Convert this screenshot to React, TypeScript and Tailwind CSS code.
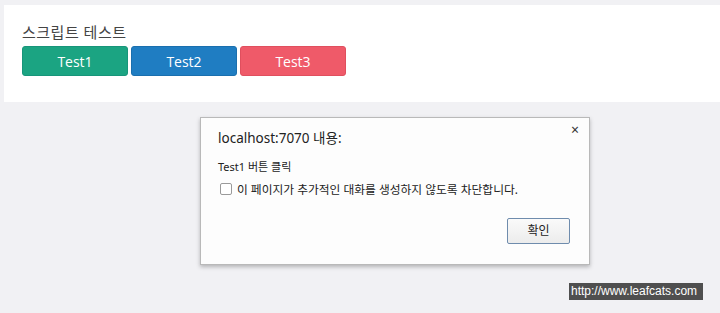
import React from "react";

const KR = "font-['Open_Sans','Noto_Sans_CJK_KR',sans-serif]";

function ScriptPanel() {
  const buttons = [
    { label: "Test1", className: "bg-[#1ba482] border-[#17957a]" },
    { label: "Test2", className: "bg-[#1f7dc2] border-[#1a6fae]" },
    { label: "Test3", className: "bg-[#ef5a69] border-[#e04f5e]" },
  ];

  return (
    <div className={`ml-[4px] mt-[5px] bg-white pl-[18px] pt-[17px] pb-[26px] ${KR}`}>
      <h2 className="text-[15px] leading-[20px] text-[#444] tracking-[0.5px]">스크립트 테스트</h2>
      <div className="mt-[4px] flex gap-[3px]">
        {buttons.map((b) => (
          <button
            key={b.label}
            type="button"
            className={`h-[30px] w-[106px] rounded-[3px] border text-[14px] text-white ${b.className}`}
          >
            {b.label}
          </button>
        ))}
      </div>
    </div>
  );
}

function AlertDialog() {
  return (
    <div className="absolute left-[200px] top-[117px] flex w-[390px] flex-col border border-[#b9b9b9] bg-[#fdfdfd] pb-[20px] pl-[17px] pr-[19px] pt-[10px] font-['Noto_Sans','Noto_Sans_CJK_KR',sans-serif] text-[#222] shadow-[0_2px_4px_rgba(0,0,0,0.25)]">
      <span className="absolute right-[10px] top-[5px] text-[14px] leading-[14px] text-[#333]">×</span>
      <p className="text-[13.5px] leading-[20px]">localhost:7070 내용:</p>
      <p className="mt-[12px] text-[11px] leading-[14px]">Test1 버튼 클릭</p>
      <label className="mt-[8px] flex items-center gap-[5px] text-[11.75px] leading-[14px]">
        <span className="ml-[2px] h-[12px] w-[12px] shrink-0 rounded-[2px] border border-[#9a9a9a] bg-white" />
        <span>이 페이지가 추가적인 대화를 생성하지 않도록 차단합니다.</span>
      </label>
      <div className="mt-[22px] flex justify-end">
        <button
          type="button"
          className="h-[26px] w-[63px] rounded-[2px] border border-[#6f8cad] bg-gradient-to-b from-[#fafafa] to-[#ececec] text-[12px] text-[#222]"
        >
          확인
        </button>
      </div>
    </div>
  );
}

export default function App() {
  return (
    <div className="relative h-[313px] w-[720px] overflow-hidden bg-[#f1f1f4]">
      <ScriptPanel />
      <AlertDialog />
      <div className="absolute left-[569px] top-[283px] h-[17px] w-[134px] bg-[#4f4f4f] pl-[2px] font-['Liberation_Sans',sans-serif] text-[12px] leading-[17px] text-white">
        http://www.leafcats.com
      </div>
    </div>
  );
}
